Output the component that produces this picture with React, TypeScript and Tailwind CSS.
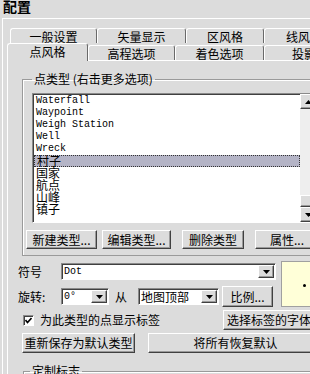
const topTabs = [
  { label: '一般设置', w: 'w-[87px]' },
  { label: '矢量显示', w: 'w-[89px]' },
  { label: '区风格', w: 'w-[78px]' },
  { label: '线风格', w: 'w-[80px]' },
]

const bottomTabs = [
  { label: '点风格', w: 'w-[81px]', selected: true },
  { label: '高程选项', w: 'w-[87px]', selected: false },
  { label: '着色选项', w: 'w-[89px]', selected: false },
  { label: '投影', w: 'w-[80px]', selected: false },
]

const pointTypes = [
  { name: 'Waterfall', cjk: false },
  { name: 'Waypoint', cjk: false },
  { name: 'Weigh Station', cjk: false },
  { name: 'Well', cjk: false },
  { name: 'Wreck', cjk: false },
  { name: '村子', cjk: true },
  { name: '国家', cjk: true },
  { name: '航点', cjk: true },
  { name: '山峰', cjk: true },
  { name: '镇子', cjk: true },
]

const raised =
  'border border-t-white border-l-white border-r-[#404040] border-b-[#404040] shadow-[inset_-1px_-1px_0_#9a9a9a] bg-[#dcdcdc]'
const sunken =
  'border border-t-[#8a8a8a] border-l-[#8a8a8a] border-r-white border-b-white shadow-[inset_1px_1px_0_#404040] bg-white'

function Btn({ children, className }: { children: React.ReactNode; className: string }) {
  return (
    <div className={`${raised} flex shrink-0 items-center justify-center leading-[14px] ${className}`}>
      {children}
    </div>
  )
}

function Arrow({ dir }: { dir: 'up' | 'down' }) {
  return (
    <svg width="7" height="4" viewBox="0 0 7 4">
      {dir === 'down' ? <polygon points="0,0 7,0 3.5,4" fill="#000" /> : <polygon points="0,4 7,4 3.5,0" fill="#000" />}
    </svg>
  )
}

function Combo({ value, className, mono }: { value: string; className: string; mono?: boolean }) {
  return (
    <div className={`${sunken} flex h-[17px] shrink-0 items-center ${className}`}>
      <span
        className={`flex-1 pl-[2px] ${mono ? "font-['Liberation_Mono',monospace] text-[10px]" : 'text-[12px]'} leading-[13px]`}
      >
        {value}
      </span>
      <div className={`${raised} mr-[1px] flex h-[13px] w-[16px] items-center justify-center`}>
        <Arrow dir="down" />
      </div>
    </div>
  )
}

export default function App() {
  return (
    <div className="h-[374px] w-[310px] overflow-hidden bg-[#dcdcdc] font-['Noto_Sans_CJK_SC',sans-serif] text-[12px] text-black">
      {/* Title */}
      <div className="h-[18px] pl-[3px] text-[14px] font-bold leading-[12px]">配置</div>

      <div className="ml-[2px] w-[340px] border-l border-t border-white pt-[9px]">
        {/* Tabs */}
        <div className="ml-[7px] flex h-[15px]">
          {topTabs.map(({ label, w }) => (
            <div
              key={label}
              className={`${w} flex h-[15px] shrink-0 items-center justify-center rounded-t-[3px] border-l border-t border-r border-l-white border-t-white border-r-[#6a6a6a] leading-[13px]`}
            >
              {label}
            </div>
          ))}
        </div>
        <div className="ml-[4px] flex h-[17px] items-end">
          {bottomTabs.map(({ label, w, selected }) =>
            selected ? (
              <div
                key={label}
                className={`${w} relative z-10 mb-[-1px] flex h-[18px] shrink-0 items-start justify-center rounded-t-[3px] border-l border-t border-r border-l-white border-t-white border-r-[#6a6a6a] bg-[#dcdcdc] pt-[1px] leading-[14px]`}
              >
                {label}
              </div>
            ) : (
              <div
                key={label}
                className={`${w} flex h-[15px] shrink-0 items-center justify-center rounded-t-[3px] border-l border-t border-r border-l-white border-t-white border-r-[#6a6a6a] bg-[#dcdcdc] leading-[13px]`}
              >
                {label}
              </div>
            ),
          )}
        </div>

        {/* Panel */}
        <div className="ml-[4px] border-l border-t border-white pt-[11px]">
          <fieldset className="ml-[14px] w-[320px] border border-[#9a9a9a] pb-[6px] pl-[3px] shadow-[inset_1px_1px_0_white]">
            <legend className="ml-[6px] px-[2px] leading-[14px]">点类型 (右击更多选项)</legend>

            {/* List */}
            <div className={`${sunken} ml-[6px] mt-[7px] flex h-[130px] w-[300px]`}>
              <div className="flex w-[267px] flex-col pl-[1px] pt-[1px]">
                {pointTypes.map(({ name, cjk }) => (
                  <div
                    key={name}
                    className={`flex h-[12px] items-center pl-[2px] ${
                      name === '村子' ? 'border border-dotted border-[#333] bg-[#b4b4c6]' : ''
                    }`}
                  >
                    <span
                      className={
                        cjk
                          ? 'text-[12px] leading-[12px]'
                          : "font-['Liberation_Mono',monospace] text-[10px] leading-[12px]"
                      }
                    >
                      {name}
                    </span>
                  </div>
                ))}
              </div>
              <div className="flex w-[16px] flex-col bg-[#eeeeee]">
                <div className={`${raised} flex h-[15px] items-center justify-center`}>
                  <Arrow dir="up" />
                </div>
                <div className="flex-1" />
                <div className={`${raised} h-[12px]`} />
                <div className={`${raised} flex h-[15px] items-center justify-center`}>
                  <Arrow dir="down" />
                </div>
              </div>
            </div>

            <div className="mt-[7px] flex h-[19px] gap-[5px]">
              <Btn className="w-[71px]">新建类型...</Btn>
              <Btn className="w-[69px]">编辑类型...</Btn>
              <Btn className="ml-[6px] w-[62px]">删除类型</Btn>
              <Btn className="ml-[6px] w-[64px]">属性...</Btn>
            </div>
          </fieldset>

          {/* Symbol + rotation */}
          <div className="mt-[5px] flex items-start">
            <div className="flex w-[273px] flex-col">
              <div className="mt-[2px] flex h-[17px] items-center pl-[10px]">
                <span className="w-[43px]">符号</span>
                <Combo value="Dot" mono className="w-[215px]" />
              </div>
              <div className="mt-[6px] flex h-[21px] items-center pl-[10px]">
                <span className="w-[43px]">旋转:</span>
                <Combo value="0°" mono className="w-[48px]" />
                <span className="ml-[6px] w-[23px]">从</span>
                <Combo value="地图顶部" className="w-[81px]" />
                <Btn className="ml-[3px] h-[21px] w-[51px]">比例...</Btn>
              </div>
            </div>
            <div className="ml-[0px] flex h-[46px] w-[40px] items-start border border-[#a0a0a0] bg-[#ffffd8]">
              <div className="ml-[21px] mt-[22px] h-[3px] w-[3px] rounded-full bg-black" />
            </div>
          </div>

          {/* Label checkbox */}
          <div className="mt-[3px] flex h-[20px] items-center">
            <div className={`${sunken} ml-[15px] flex h-[11px] w-[11px] items-center justify-center`}>
              <svg width="7" height="7" viewBox="0 0 7 7">
                <polyline points="0.5,3 2.5,5.5 6.5,1" fill="none" stroke="#000" strokeWidth="1.6" />
              </svg>
            </div>
            <span className="ml-[6px] w-[183px] leading-[14px]">为此类型的点显示标签</span>
            <Btn className="h-[20px] w-[92px]">选择标签的字体</Btn>
          </div>

          {/* Defaults */}
          <div className="mt-[3px] flex h-[20px]">
            <Btn className="ml-[14px] h-[20px] w-[113px]">重新保存为默认类型</Btn>
            <Btn className="ml-[13px] h-[20px] w-[175px]">将所有恢复默认</Btn>
          </div>

          <fieldset className="ml-[15px] mt-[11px] h-[30px] w-[320px] border border-[#9a9a9a] shadow-[inset_1px_1px_0_white]">
            <legend className="ml-[6px] px-[2px] leading-[14px]">定制标志</legend>
          </fieldset>
        </div>
      </div>
    </div>
  )
}
